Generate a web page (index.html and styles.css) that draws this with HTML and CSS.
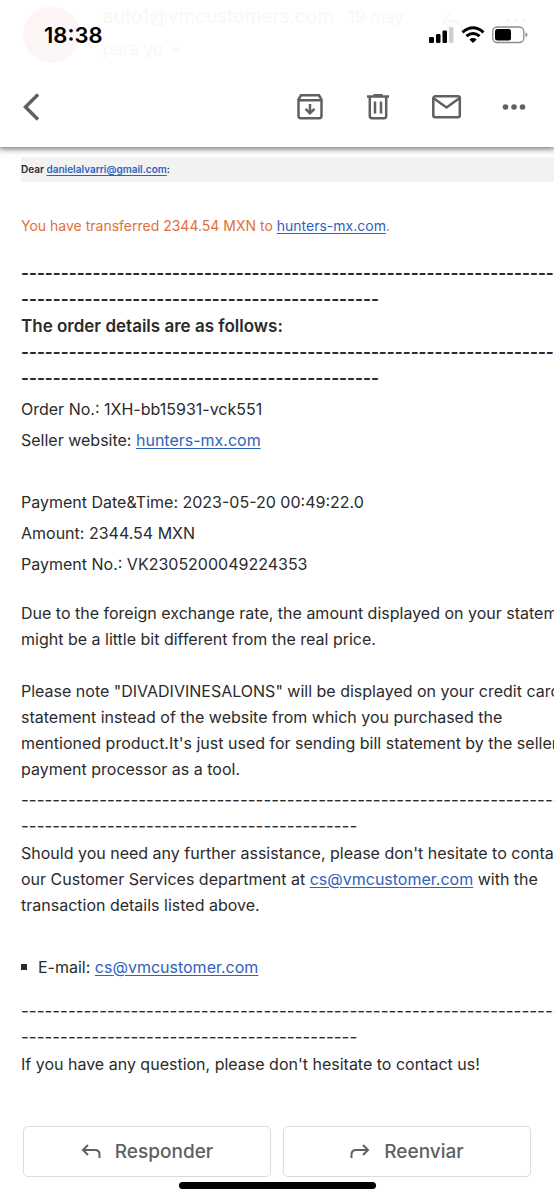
FILE: index.html
```
<!DOCTYPE html>
<html lang="es">
<head>
<meta charset="utf-8">
<meta name="viewport" content="width=device-width, initial-scale=1">
<title>Correo</title>
<link rel="stylesheet" href="styles.css">
</head>
<body>
<div class="screen">
  <header class="top">
    <div class="ghost" aria-hidden="true">
      <span class="ghost-avatar"></span>
      <div class="ghost-text">
        <div class="ghost-from"><span>auto1@vmcustomers.com</span><span class="ghost-date">19 may</span></div>
        <div class="ghost-to">para yo <svg width="10" height="6" viewBox="0 0 10 6"><path d="M1 1l4 4 4-4" fill="none" stroke="currentColor" stroke-width="2"/></svg></div>
      </div>
      <svg class="ghost-icons" width="90" height="24" viewBox="0 0 90 24"><path d="M10 2L3 9l7 7M3 9h11q8 0 8 9" fill="none" stroke="currentColor" stroke-width="2"/><g fill="currentColor"><circle cx="68" cy="9" r="2"/><circle cx="76" cy="9" r="2"/><circle cx="84" cy="9" r="2"/></g></svg>
    </div>
    <div class="status">
      <time class="clock">18:38</time>
      <div class="indicators">
        <svg width="25" height="18" viewBox="0 0 25 18"><rect x="0" y="11" width="5" height="6" rx="1.3"/><rect x="7" y="8" width="4.500" height="9" rx="1.300"/><rect x="13.500" y="4.500" width="4.500" height="12.500" rx="1.300"/><rect x="20" y="1" width="4.500" height="16" rx="1.300" fill="#d0d0d0"/></svg>
        <svg width="24" height="18" viewBox="0 0 24 18"><g fill="none" stroke="#000" stroke-width="3"><path d="M1.500 6.300Q12-2.800 22.500 6.300"/><path d="M5.400 10.200Q12 4.800 18.600 10.200"/></g><path d="M8.400 13.400Q12 10.600 15.600 13.400L12 17z"/></svg>
        <svg width="36" height="18" viewBox="0 0 36 18"><rect x=".8" y="1" width="31" height="15.500" rx="4.500" fill="none" stroke="#8b8b8b" stroke-width="1.300"/><rect x="3" y="3" width="16" height="11.500" rx="2.500"/><path d="M33.500 6.500q2 .5 2 2.300t-2 2.300z" fill="#8b8b8b"/></svg>
      </div>
    </div>
    <nav class="toolbar">
      <button class="tool" aria-label="Atrás"><svg width="20" height="30" viewBox="0 0 20 30"><path d="M16 2.500L3.500 15 16 27.500" fill="none" stroke="currentColor" stroke-width="3.500"/></svg></button>
      <div class="actions">
        <button class="tool" aria-label="Archivar"><svg width="28" height="28" viewBox="0 0 28 28" fill="none" stroke="currentColor" stroke-width="2.500"><path d="M2.500 6.500L5 2.300h18l2.500 4.200V23q0 2.200-2.200 2.200H4.700Q2.500 25.200 2.500 23zM2.500 7.300h23M14 11v9M9.500 15.800l4.500 4.500 4.500-4.500"/></svg></button>
        <button class="tool" aria-label="Eliminar"><svg width="28" height="28" viewBox="0 0 28 28" fill="none" stroke="currentColor" stroke-width="2.500"><path d="M3 3.500h22M9.500 2.200h9M5.800 4v19q0 2.200 2.200 2.200h12q2.200 0 2.200-2.200V4M11 8.500v12M17 8.500v12"/></svg></button>
        <button class="tool" aria-label="Marcar como no leído"><svg width="30" height="28" viewBox="0 0 30 28" fill="none" stroke="currentColor" stroke-width="2.500"><rect x="1.300" y="3.300" width="26.500" height="20.900" rx="2"/><path d="M2 5.500l12.500 9 12.500-9"/></svg></button>
        <button class="tool" aria-label="Más opciones"><svg width="24" height="28" viewBox="0 0 24 28" fill="currentColor"><circle cx="3.500" cy="14" r="2.800"/><circle cx="12" cy="14" r="2.800"/><circle cx="20.500" cy="14" r="2.800"/></svg></button>
      </div>
    </nav>
  </header>

  <main class="mail">
    <p class="greeting">Dear <a href="mailto:danielalvarri@gmail.com">danielalvarri@gmail.com</a>:</p>
    <p class="notice">You have transferred 2344.54 MXN to <a href="#">hunters-mx.com</a>.</p>
    <section class="strong">
      <p class="rule">----------------------------------------------------------------------<br>---------------------------------------------</p>
      <h1 class="heading">The order details are as follows:</h1>
      <p class="rule">----------------------------------------------------------------------<br>---------------------------------------------</p>
    </section>
    <section class="facts">
      <p>Order No.: 1XH-bb15931-vck551</p>
      <p>Seller website: <a href="#">hunters-mx.com</a></p>
    </section>
    <section class="facts payment">
      <p>Payment Date&amp;Time: 2023-05-20 00:49:22.0</p>
      <p>Amount: 2344.54 MXN</p>
      <p>Payment No.: VK2305200049224353</p>
    </section>
    <p class="para">Due to the foreign exchange rate, the amount displayed on your statement<br>might be a little bit different from the real price.</p>
    <p class="para note">Please note "DIVADIVINESALONS" will be displayed on your credit card<br>statement instead of the website from which you purchased the<br>mentioned product.It's just used for sending bill statement by the seller's<br>payment processor as a tool.</p>
    <p class="rule light">------------------------------------------------------------------------<br>-------------------------------------------</p>
    <p>Should you need any further assistance, please don't hesitate to contact<br>our Customer Services department at <a href="mailto:cs@vmcustomer.com">cs@vmcustomer.com</a> with the<br>transaction details listed above.</p>
    <ul class="contact"><li>E-mail: <a href="mailto:cs@vmcustomer.com">cs@vmcustomer.com</a></li></ul>
    <p class="rule light">------------------------------------------------------------------------<br>-------------------------------------------</p>
    <p>If you have any question, please don't hesitate to contact us!</p>
  </main>

  <footer class="bottom">
    <div class="replies">
      <button class="reply"><svg width="20" height="18" viewBox="0 0 20 18" fill="none" stroke="currentColor" stroke-width="2"><path d="M7 2L2 7l5 5M2 7h12q4.500 0 4.500 4.500V15"/></svg>Responder</button>
      <button class="reply"><svg width="20" height="18" viewBox="0 0 20 18" fill="none" stroke="currentColor" stroke-width="2"><path d="M13 2l5 5-5 5M18 7H6q-4.500 0-4.500 4.500V15"/></svg>Reenviar</button>
    </div>
    <div class="home-bar"></div>
  </footer>
</div>
</body>
</html>
```
FILE: styles.css
```
* { box-sizing: border-box; }
body { margin: 0; background: #fff; color: #2b2b2b; font-family: Inter, "Liberation Sans", sans-serif; }
p, h1, ul { margin: 0; padding: 0; }
button { font: inherit; color: inherit; background: none; border: 0; padding: 0; }
svg { display: block; flex: none; }
a { color: #2f62bd; text-underline-offset: 2px; }

.screen { min-height: 100vh; display: flex; flex-direction: column; overflow: hidden; }

.top { position: relative; background: #fff; box-shadow: 0 1px 6px 1px rgba(0, 0, 0, .55); height: 147px; }
.status { position: relative; display: flex; justify-content: space-between; align-items: center; height: 70px; padding: 0 26px 0 44px; }
.clock { color: #000; font-size: 22px; font-weight: 600; }
.indicators { display: flex; gap: 7px; }
.toolbar { position: relative; display: flex; justify-content: space-between; align-items: center; height: 74px; padding: 0 28px 0 22px; color: #5f6064; }
.actions { display: flex; align-items: center; gap: 40px; }

.ghost { position: absolute; inset: 6px 24px auto 23px; display: flex; gap: 23px; color: #f7f7f7; font-size: 17px; line-height: 22px; }
.ghost-avatar { width: 57px; height: 57px; border-radius: 50%; background: #fdf6f6; }
.ghost-from { display: flex; gap: 14px; font-size: 19px; }
.ghost-date { font-size: 17px; }
.ghost-to { display: flex; align-items: center; gap: 8px; margin-top: 10px; }
.ghost-icons { position: absolute; right: 0; top: 6px; }

.mail { flex: 1; padding: 10px 0 20px 21px; white-space: nowrap; font-size: 16px; line-height: 26px; }
.rule { font-size: 17px; }
.greeting { background: #f2f2f2; font-size: 10px; line-height: 25px; font-weight: 600; }
.notice { margin-top: 31px; color: #e0703a; font-size: 14px; }
.strong { margin-top: 21px; font-weight: 700; }
.heading { margin: 1px 0 0; font-size: 17px; font-weight: 600; }
.facts { margin-top: 3px; line-height: 31px; }
.payment { margin-top: 31px; }
.para { margin-top: 20px; }
.note { margin-top: 26px; }
.light { margin-top: 5px; }
.light + p { margin-top: 1px; }
.contact { margin-top: 36px; list-style: none; }
.contact li { display: flex; align-items: center; white-space: pre; }
.contact li::before { content: ""; width: 6px; height: 6px; margin-right: 11px; background: #2b2b2b; }
.contact + .light { margin-top: 18px; }

.bottom { padding: 0 23px 11px; color: #5f6064; }
.replies { display: flex; gap: 12px; }
.reply { flex: 1; height: 51px; display: flex; align-items: center; justify-content: center; gap: 14px; border: 1px solid #dcdce0; border-radius: 5px; font-size: 19px; font-weight: 500; }
.home-bar { width: 197px; height: 7px; margin: 5px auto 0; border-radius: 4px; background: #000; }
```
